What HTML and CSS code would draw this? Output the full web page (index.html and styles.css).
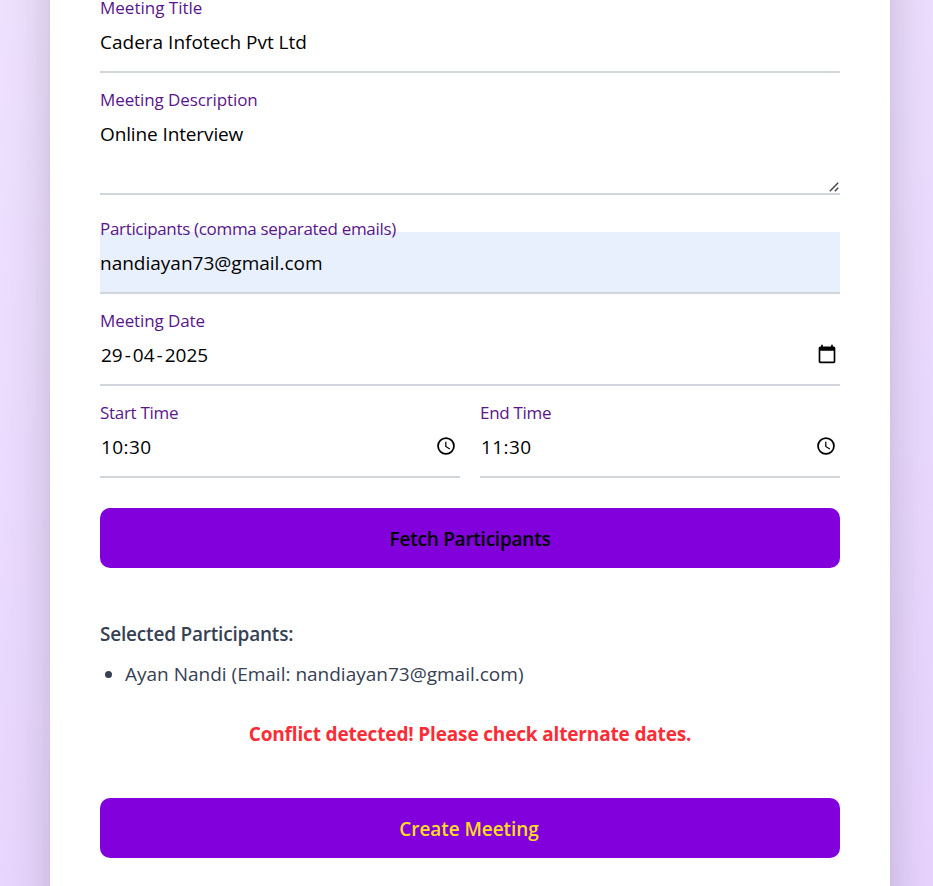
FILE: index.html
```html
<!DOCTYPE html>
<html lang="en">
<head>
<meta charset="utf-8">
<title>Create Meeting</title>
<link rel="stylesheet" href="styles.css">
</head>
<body>
<main class="card">
  <div class="field">
    <label class="label">Meeting Title</label>
    <div class="control">Cadera Infotech Pvt Ltd</div>
  </div>
  <div class="field field-area">
    <label class="label label-desc">Meeting Description</label>
    <div class="control area">Online Interview
      <svg class="grip" viewBox="0 0 10 10"><path d="M.8 9.200 9.200.8M5.800 9.200 9.200 5.800"/></svg>
    </div>
  </div>
  <div class="field">
    <label class="label label-participants">Participants (comma separated emails)</label>
    <div class="control autofill">nandiayan73@gmail.com</div>
  </div>
  <div class="field">
    <label class="label label-date">Meeting Date</label>
    <div class="control picker"><span class="date">29<i class="dash">-</i>04<i class="dash">-</i>2025</span>
      <svg class="icon" viewBox="0 0 24 24"><path d="M20 3h-1V1h-2v2H7V1H5v2H4c-1.100 0-2 .9-2 2v16c0 1.100.9 2 2 2h16c1.100 0 2-.9 2-2V5c0-1.100-.9-2-2-2zm0 18H4V8h16v13z"/></svg>
    </div>
  </div>
  <div class="row">
    <div class="field">
      <label class="label label-time">Start Time</label>
      <div class="control picker time"><span class="clock">10:30</span>
        <svg class="icon" viewBox="0 0 24 24"><path d="M12 1.400a10.600 10.600 0 1 0 0 21.200 10.600 10.600 0 0 0 0-21.200zm0 19.100a8.500 8.500 0 1 1 0-17 8.500 8.500 0 0 1 0 17zm.5-13.500H11v6l5.250 3.150.75-1.230-4.500-2.670z"/></svg>
      </div>
    </div>
    <div class="field">
      <label class="label label-time">End Time</label>
      <div class="control picker time"><span class="clock">11:30</span>
        <svg class="icon" viewBox="0 0 24 24"><path d="M12 1.400a10.600 10.600 0 1 0 0 21.200 10.600 10.600 0 0 0 0-21.200zm0 19.100a8.500 8.500 0 1 1 0-17 8.500 8.500 0 0 1 0 17zm.5-13.500H11v6l5.250 3.150.75-1.230-4.500-2.670z"/></svg>
      </div>
    </div>
  </div>
  <button class="button fetch">Fetch Participants</button>
  <section class="selected">
    <h3 class="heading">Selected Participants:</h3>
    <ul class="list"><li>Ayan Nandi (Email: nandiayan73@gmail.com)</li></ul>
  </section>
  <p class="alert">Conflict detected! Please check alternate dates.</p>
  <button class="button create">Create Meeting</button>
</main>
</body>
</html>
```
FILE: styles.css
```css
* { box-sizing: border-box; margin: 0; padding: 0; }
html { height: 100%; overflow: hidden; }
body {
  height: 886px;
  overflow: hidden;
  display: flex;
  align-items: flex-start;
  padding-left: 50px;
  background: linear-gradient(165deg, #efe2ff, #e8d4ff);
  font-family: "Segoe UI", "Open Sans", "Noto Sans", sans-serif;
  font-size: 19px;
  line-height: 30px;
  color: #000;
}
.card {
  flex: none;
  width: 840px;
  height: 1086px;
  margin-top: -100px;
  padding: 111px 50px 0;
  background: #fff;
  box-shadow: 0 0 62px -15px rgba(0, 0, 0, .25), 0 0 40px -4px rgba(0, 0, 0, .04);
}
.field { display: flex; flex-direction: column; flex: 1; margin-bottom: 30px; }
.label {
  height: 25px;
  margin: -16px 0 -9px;
  line-height: 25px;
  font-size: 17px;
  color: #59168b;
  position: relative;
  z-index: 1;
  white-space: nowrap;
}
.label-desc { letter-spacing: -.1px; }
.label-participants { letter-spacing: -.32px; }
.label-date { letter-spacing: -.1px; }
.label-time { letter-spacing: -.3px; }
.control {
  height: 62px;
  padding: 16px 0 14px;
  border-bottom: 2px solid #d1d5dc;
  white-space: nowrap;
}
.area { height: 92px; position: relative; letter-spacing: -.12px; }
.grip {
  position: absolute;
  right: 1px;
  bottom: 1px;
  width: 10px;
  height: 10px;
  fill: none;
  stroke: #4a4a4a;
  stroke-width: 1.5;
}
.field-area { margin-bottom: 37px; }
.autofill { background: #e8f0fe; }
.picker { display: flex; justify-content: space-between; padding-left: 1px; padding-right: 3px; }
.time { padding-right: 4.5px; }
.date { letter-spacing: 0; }
.dash { font-style: normal; margin: 0 2px; }
.clock { letter-spacing: .4px; }
.icon { width: 20px; height: 20px; margin-top: 4px; }
.row { display: flex; gap: 20px; }
.button {
  display: block;
  width: 740px;
  height: 60px;
  border: 0;
  border-radius: 10px;
  background: #8200db;
  font: 600 19px/30px "Segoe UI", "Open Sans", "Noto Sans", sans-serif;
  padding-top: 2px;
}
.fetch { letter-spacing: -.24px; }
.create { color: #ffdf20; letter-spacing: -.08px; padding-right: 2px; }
.selected { margin-top: 51px; color: #364153; }
.heading { font-size: 19px; font-weight: 600; letter-spacing: -.2px; }
.list { margin-top: 10px; padding-left: 25px; }
.alert { margin: 30px 0 49px; text-align: center; font-weight: 700; color: #fb2c36; letter-spacing: -.16px; }
```
